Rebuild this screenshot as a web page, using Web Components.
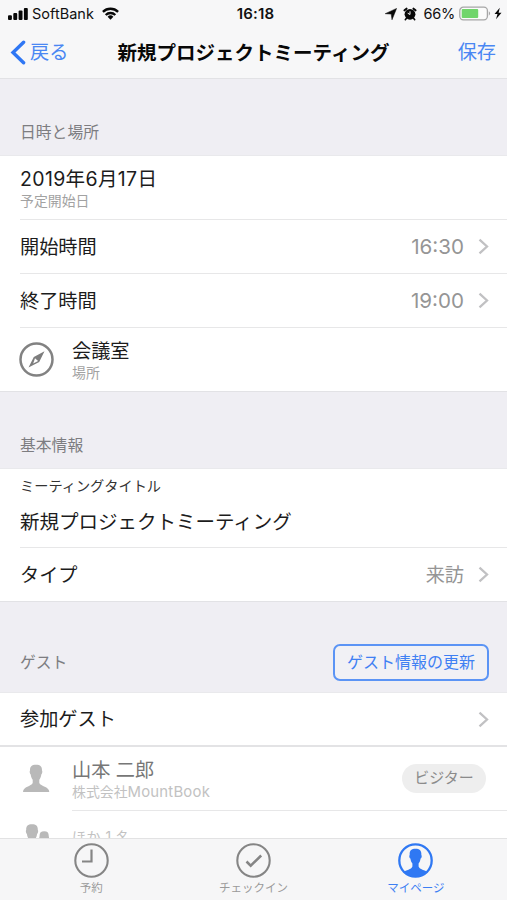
<!DOCTYPE html>
<html lang="ja">
<head>
<meta charset="utf-8">
<title>新規プロジェクトミーティング</title>
<style>
html,body{margin:0;height:100%;background:#efeef3}
body{font-family:Inter,"Noto Sans CJK JP",sans-serif;font-size:19.2px;color:#1c1c1c;overflow:hidden}
</style>
</head>
<body>
<meeting-screen></meeting-screen>
<script>
function define(name, html) {
  const template = document.createElement('template');
  template.innerHTML = html;
  customElements.define(name, class extends HTMLElement {
    constructor() {
      super();
      this.attachShadow({ mode: 'open' }).appendChild(template.content.cloneNode(true));
    }
  });
}

define('status-bar', `
<style>
:host{display:grid;grid-template-columns:1fr auto 1fr;align-items:center;height:27px;padding:0 5px 0 8px;font-size:14.5px;line-height:27px;color:#111;box-sizing:border-box}
div{display:flex;align-items:center}
.r{justify-content:flex-end}
b{font-weight:600;font-size:15px;letter-spacing:.2px;margin-left:1px}
svg{display:block;flex:none}
</style>
<div><svg width="20" height="14" viewBox="0 0 20 14" fill="#080808"><rect x="0" y="8.2" width="3.9" height="4.8" rx="1"/><rect x="5.3" y="6" width="3.9" height="7" rx="1"/><rect x="10.6" y="3.6" width="3.9" height="9.4" rx="1"/><rect x="15.9" y="1" width="3.900" height="12" rx="1"/></svg>
<span style="margin-left:4px;letter-spacing:.02px">SoftBank</span>
<svg style="margin-left:8px" width="17" height="13" viewBox="0 0 17 13"><g fill="none" stroke="#080808" stroke-width="2.3"><path d="M.9 4.9a10.8 10.8 0 0 1 15.2 0"/><path d="M3.7 8a6.8 6.8 0 0 1 9.6 0"/></g><path d="M5.6 9.8a4.1 4.1 0 0 1 5.8 0L8.500 12.700z" fill="#080808"/></svg></div>
<b>16:18</b>
<div class="r"><svg width="12" height="12" viewBox="0 0 12 12"><path d="M11.600.4 7 11.800 6.200 6.100.2 5.700z" fill="#080808" stroke="#080808" stroke-width=".5"/></svg>
<svg style="margin-left:6px" width="14" height="14" viewBox="0 0 14 14"><circle cx="7" cy="7.300" r="5.400" fill="#080808"/><g stroke="#080808" stroke-linecap="round"><path d="M1.500 3.300 3.500 1.700M12.500 3.300 10.500 1.700" stroke-width="2.100"/><path d="m3.600 11-1.300 1.700M10.400 11l1.300 1.700" stroke-width="1.600"/></g><path d="M7 4.300v3.200L4.700 6.200" fill="none" stroke="#f7f7f7" stroke-width="1"/></svg>
<span style="margin-left:6px;letter-spacing:-.2px">66%</span>
<svg style="margin-left:4px" width="33" height="15" viewBox="0 0 33 15"><rect x=".8" y="1.200" width="27.600" height="12.600" rx="3.500" fill="#fbfbfb" stroke="#a6a6a6" stroke-width="1.300"/><rect x="2.700" y="3" width="16.500" height="9" rx="1" fill="#70d56b"/><path d="M29.800 5.300q2.700 2.200 0 4.400z" fill="#a6a6a6"/></svg>
<svg style="margin-left:2px" width="8" height="13" viewBox="0 0 8 13"><path d="M5.800.7.5 7.100h3L2 12.300l5.500-6.500H4.600z" fill="#080808"/></svg></div>`);

define('nav-bar', `
<style>
:host{display:grid;grid-template-columns:1fr auto 1fr;align-items:center;height:51px;padding:0 10px 0 10px;color:#4a87f3;box-sizing:border-box}
h1{font-size:19.5px;font-weight:600;margin:0;color:#080808;line-height:24px}
h1,a{white-space:nowrap}
a{line-height:25px}
.back{display:flex;align-items:center;gap:4px}
.save{text-align:right;padding-right:1px}
svg{display:block}
</style>
<a class="back"><svg width="16" height="26" viewBox="0 0 16 26"><path d="M13.600 2.300 3 12.500l10.600 10.200" fill="none" stroke="#2f77f4" stroke-width="3.400" stroke-linecap="round"/></svg><span><slot name="back"></slot></span></a>
<h1><slot></slot></h1>
<a class="save"><slot name="save"></slot></a>`);

define('section-header', `
<style>
:host{display:flex;align-items:flex-end;justify-content:space-between;box-sizing:border-box;height:var(--h,78px);padding:0 18px 10px 20px;background:#efeef3;color:#7d7d81;font-size:15.8px;line-height:24px;border-top:1px solid #e2e2e5;border-bottom:1px solid #e9e9ec}
</style><slot></slot><slot name="action"></slot>`);

define('outline-button', `
<style>
:host{display:block}
button{font:inherit;font-size:16px;line-height:24px;color:#3f80f3;background:#f1f1f5;border:2px solid #5b94f5;border-radius:7px;width:156px;height:37px;padding:0 0 2px;box-sizing:border-box;display:block;white-space:nowrap}
</style><button><slot></slot></button>`);

define('list-row', `
<style>
:host{display:flex;height:var(--h,54px);box-sizing:border-box;padding-left:20px;background:#fff;line-height:24px}
.icon{display:block;flex:none}
.icon ::slotted(*){width:52px}
.main{flex:1;display:flex;align-items:center;border-bottom:var(--line,1px solid #e7e7e8);padding-right:18px;box-sizing:border-box}
.text{flex:1;display:flex;flex-direction:column;white-space:nowrap;padding:var(--tp,0)}
::slotted([slot=sub]){font-size:13.9px;line-height:20px;color:var(--sub,#a2a2a2)}
::slotted([slot=value]){color:#959595;white-space:nowrap}
</style>
<div class="icon"><slot name="icon"></slot></div>
<div class="main"><div class="text"><slot></slot><slot name="sub"></slot></div><slot name="value"></slot><slot name="end"></slot></div>`);

define('chevron-right', `
<style>:host{display:block;margin-left:14px}svg{display:block}</style>
<svg width="11" height="17" viewBox="0 0 11 17"><path d="M1.500 1.700 9 8.500l-7.500 6.800" fill="none" stroke="#c1c1c3" stroke-width="2.300"/></svg>`);

define('role-badge', `
<style>:host{display:block;width:84px;height:29px;border-radius:15px;background:#eee;color:#8b8b8b;font-size:15px;line-height:27px;text-align:center;margin-right:3px}</style><slot></slot>`);

define('compass-icon', `
<style>:host{display:flex;align-items:center;height:63px}svg{display:block;margin-left:-1px}</style>
<svg width="35" height="35" viewBox="0 0 35 35"><circle cx="17.500" cy="17.500" r="16" fill="none" stroke="#828282" stroke-width="2.500"/><path fill="#7d7d7d" fill-rule="evenodd" d="M25.500 9.300 14.800 15 9.500 25.500 20.200 20zM16 16.200l3.100 2.900-4.900 2.500z"/></svg>`);

define('person-icon', `
<style>:host{display:flex;align-items:center;height:62px}svg{display:block;margin-left:3px}</style>
<svg width="27" height="29" viewBox="0 0 27 29"><path fill="#b9b9b9" d="M13 .8c4.400 0 6.200 1.900 6 5.800.8.900.1 3.300-.7 3.900-.3 2.400-1 4.200-2 5.200v3.400c1.500 3.400 9.700 3.500 10 8.900H0c.3-5.400 8.200-5.500 9.700-8.900v-3.400c-1-1-1.700-2.800-2-5.200-.8-.6-1.500-3-.7-3.900-.2-3.900 1.600-5.800 6-5.800z"/></svg>`);

define('people-icon', `
<style>:host{display:block;padding-top:13px}svg{display:block;margin-left:5px}</style>
<svg width="26" height="29" viewBox="0 0 26 29"><g fill="#b9b9b9"><path d="M7 .2c4.300 0 6 2 5.800 5.900.8.9.1 3.300-.7 3.900-.3 2.300-1 4-1.900 5v3.400C11 21 18 22 18 27H0v-8l3.800-4c-.9-1-1.600-2.700-1.900-5-.8-.6-1.500-3-.7-3.900C1 2.200 2.700.2 7 .2z"/><path d="M19.200 7.300c3.400 0 4.700 1.700 4.500 4.900.7.700.1 2.700-.5 3.200-.5 4-2 4.600-2 6.600l4 5h-7c0-4-2.200-5-2.200-7-.5-1-.7-2.600-.9-4.600-.6-.5-1.200-2.500-.5-3.200-.2-3.200 1.100-4.900 4.600-4.900z"/></g></svg>`);

define('tab-item', `
<style>
:host{display:flex;flex-direction:column;align-items:center;color:#9a9a9a;font-size:11.500px;line-height:18px;padding-top:4px;white-space:nowrap}
:host([active]){color:#3d7ff3}
::slotted(svg){display:block;margin-bottom:1px}
</style><slot name="icon"></slot><span><slot></slot></span>`);

define('tab-bar', `
<style>
:host{display:grid;grid-template-columns:1fr 1fr 1fr;box-sizing:border-box;width:507px;height:62px;padding:0 10px;background:#f6f6f7;border-top:1px solid #e2e2e3}
</style>
<tab-item><svg slot="icon" width="35" height="35" viewBox="0 0 35 35" fill="none" stroke="#858585"><circle cx="17.500" cy="17.500" r="16.200" stroke-width="2.100"/><path d="M17.500 6.500v12H8" stroke-width="2.200"/></svg>予約</tab-item>
<tab-item><svg slot="icon" width="35" height="35" viewBox="0 0 35 35" fill="none" stroke="#858585"><circle cx="17.500" cy="17.500" r="16.200" stroke-width="2.100"/><path d="m10.500 18.500 4.200 4.200 10.500-10.200" stroke-width="2.500"/></svg>チェックイン</tab-item>
<tab-item active><svg slot="icon" width="35" height="35" viewBox="0 0 35 35"><circle cx="17.500" cy="17.500" r="16.200" fill="none" stroke="#2f78f3" stroke-width="2.300"/><path fill="#2f78f3" d="M17.500 5.800c4.300 0 6.200 2.300 5.800 6.200.9.800.2 3.100-.7 3.600-.3 2.300-1 3.800-2 4.800v3c1 3.200 6.300 3.500 9.200 5.600-7 6.700-17.600 6.700-24.600 0 2.900-2.100 8.200-2.400 9.200-5.600v-3c-1-1-1.700-2.500-2-4.800-.9-.5-1.600-2.800-.7-3.600-.4-3.900 1.500-6.200 5.800-6.200z"/></svg>マイページ</tab-item>`);

define('meeting-screen', `
<style>
:host{display:grid;grid-template-rows:27px 51px minmax(0,1fr) 62px;width:507px;height:900px;background:#f7f7f8}
main{overflow:hidden;min-height:0;background:#fff}
.date{font-size:19.500px;letter-spacing:.35px}
.time{font-size:20.600px}
.field{font-size:14.200px;line-height:20px;margin-bottom:14px;color:#333}
.title{font-size:19.500px}
.guest{--h:64px;--sub:#c2c2c2;color:#777}
.latin{font-size:14.900px;letter-spacing:.2px}
</style>
<status-bar></status-bar>
<nav-bar><span slot="back">戻る</span>新規プロジェクトミーティング<span slot="save">保存</span></nav-bar>
<main>
<section-header>日時と場所</section-header>
<list-row style="--h:64px;--tp:2px 0 0"><span class="date">2019年6月17日</span><span slot="sub">予定開始日</span></list-row>
<list-row>開始時間<span slot="value" class="time">16:30</span><chevron-right slot="end"></chevron-right></list-row>
<list-row>終了時間<span slot="value" class="time">19:00</span><chevron-right slot="end"></chevron-right></list-row>
<list-row style="--h:63px;--line:0;--tp:3px 0 0"><compass-icon slot="icon"></compass-icon>会議室<span slot="sub">場所</span></list-row>
<section-header>基本情報</section-header>
<list-row style="--h:79px;--tp:0 0 6px"><span class="field">ミーティングタイトル</span><span class="title">新規プロジェクトミーティング</span></list-row>
<list-row style="--h:53px;--line:0">タイプ<span slot="value">来訪</span><chevron-right slot="end"></chevron-right></list-row>
<section-header style="--h:92px"><span style="margin-bottom:7px">ゲスト</span><outline-button slot="action" style="margin-bottom:1px">ゲスト情報の更新</outline-button></section-header>
<list-row style="--h:52px;--line:0">参加ゲスト<chevron-right slot="end"></chevron-right></list-row>
<div style="height:2px;background:#e3e3e5"></div>
<list-row class="guest" style="--tp:2px 0 0"><person-icon slot="icon"></person-icon>山本 二郎<span slot="sub">株式会社<span class="latin">MountBook</span></span><role-badge slot="end">ビジター</role-badge></list-row>
<list-row class="guest" style="--tp:0 0 11px"><people-icon slot="icon"></people-icon><span slot="sub" style="letter-spacing:.6px">ほか 1 名</span></list-row>
</main>
<tab-bar></tab-bar>`);
</script>
</body>
</html>
